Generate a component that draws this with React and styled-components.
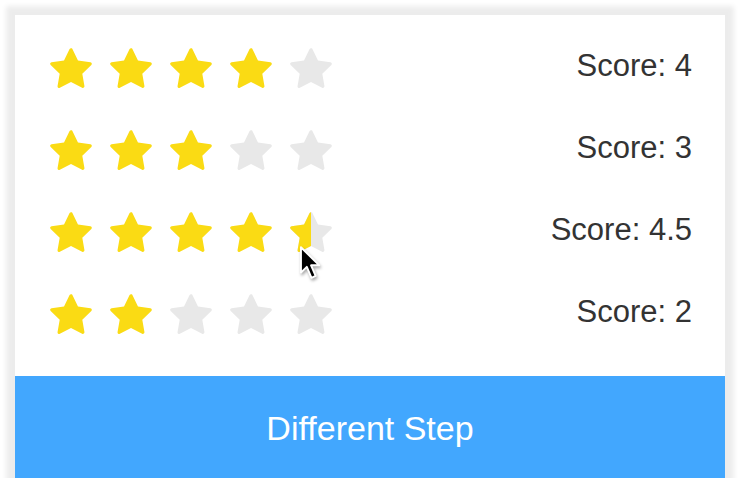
import React from "react";
import styled, { createGlobalStyle } from "styled-components";

const GlobalStyle = createGlobalStyle`
  html, body {
    margin: 0;
    padding: 0;
    background: #fff;
  }
  body {
    font-family: "Liberation Sans", Arial, sans-serif;
    overflow: hidden;
  }
`;

const Page = styled.div`
  width: 740px;
  height: 492px;
  padding: 15px 15px 0;
  box-sizing: border-box;
  position: relative;
`;

const Card = styled.div`
  width: 710px;
  height: 463px;
  background: #fff;
  display: flex;
  flex-direction: column;
  box-shadow: 0 0 5px 9px rgba(0, 0, 0, 0.075);
  clip-path: inset(-20px -20px 0 -20px);
`;

const List = styled.div`
  flex: 1;
  padding: 14px 33px 0 34px;
  display: flex;
  flex-direction: column;
`;

const Row = styled.div`
  height: 82px;
  display: flex;
  align-items: center;
  justify-content: space-between;
`;

const Stars = styled.div`
  display: flex;
  gap: 16px;
`;

const StarBox = styled.div`
  position: relative;
  width: 44px;
  height: 44px;
  svg {
    display: block;
    width: 44px;
    height: 44px;
  }
`;

const HalfLayer = styled.div`
  position: absolute;
  top: 0;
  left: 0;
  width: 50%;
  height: 100%;
  overflow: hidden;
`;

const Score = styled.span`
  font-size: 31px;
  color: #333;
  margin-top: -8px;
`;

const Button = styled.button`
  height: 102px;
  border: none;
  background: #42a7fe;
  color: #fff;
  font-family: "Liberation Sans", Arial, sans-serif;
  font-size: 34px;
  padding: 2px 0 0;
  cursor: pointer;
`;

const Pointer = styled.svg`
  position: absolute;
  left: 299px;
  top: 245px;
  width: 26px;
  height: 37px;
  filter: drop-shadow(1px 2px 1.5px rgba(0, 0, 0, 0.35));
`;

const STAR_PATH =
  "M908.1 353.1l-253.9-36.9L540.7 86.1c-3.1-6.3-8.2-11.4-14.5-14.5-15.8-7.8-35-1.3-42.9 14.5L369.8 316.2l-253.9 36.9c-7 1-13.4 4.3-18.3 9.3a32.05 32.05 0 00.6 45.3l183.7 179.1-43.4 252.9a31.95 31.95 0 0046.4 33.7L512 754l227.1 119.4c6.2 3.3 13.4 4.4 20.3 3.2 17.4-3 29.1-19.5 26.1-36.9l-43.4-252.9 183.7-179.1c5-4.9 8.3-11.3 9.3-18.3 2.7-17.5-9.5-33.7-27-36.3z";

const StarIcon = ({ color }) => (
  <svg viewBox="64 64 896 896">
    <path d={STAR_PATH} fill={color} />
  </svg>
);

const Star = ({ fill }) => (
  <StarBox>
    <StarIcon color={fill === 1 ? "#fadb14" : "#e8e8e8"} />
    {fill === 0.5 && (
      <HalfLayer>
        <StarIcon color="#fadb14" />
      </HalfLayer>
    )}
  </StarBox>
);

const Rate = ({ value }) => (
  <Stars>
    {[0, 1, 2, 3, 4].map((i) => {
      const fill = value >= i + 1 ? 1 : value >= i + 0.5 ? 0.5 : 0;
      return <Star key={i} fill={fill} />;
    })}
  </Stars>
);

const scores = [4, 3, 4.5, 2];

export default function App() {
  return (
    <Page>
      <GlobalStyle />
      <Card>
        <List>
          {scores.map((s, i) => (
            <Row key={i}>
              <Rate value={s} />
              <Score>Score: {s}</Score>
            </Row>
          ))}
        </List>
        <Button>Different Step</Button>
      </Card>
      <Pointer viewBox="0 0 20 28">
        <path
          d="M1.5 1.5 L1.5 21 L6 16.6 L9.6 25 L12.8 23.6 L9.3 15.4 L15.6 15.4 Z"
          fill="#000"
          stroke="#fff"
          strokeWidth="1.5"
          strokeLinejoin="round"
        />
      </Pointer>
    </Page>
  );
}
